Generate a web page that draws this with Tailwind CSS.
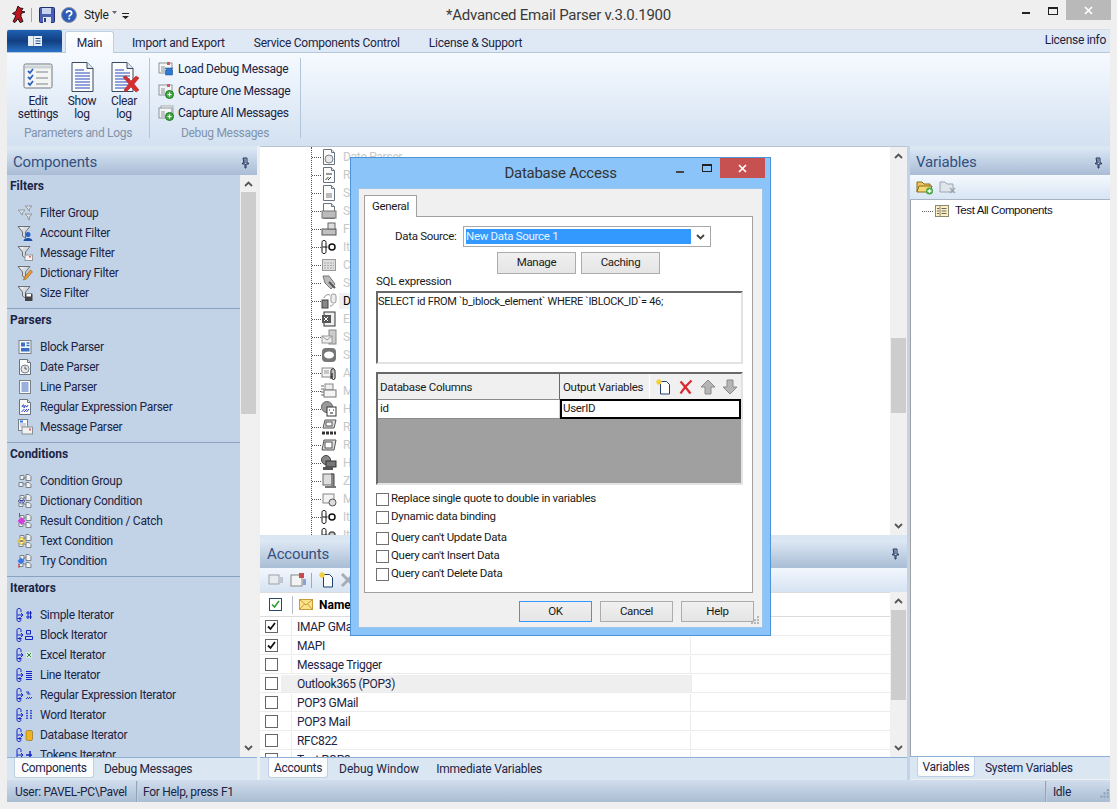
<!DOCTYPE html>
<html>
<head>
<meta charset="utf-8">
<script src="https://cdn.jsdelivr.net/npm/@tailwindcss/browser@4"></script>
</head>
<body class="font-['Roboto',sans-serif] text-[12px] tracking-[-.3px] leading-none text-[#1b2444]">
<svg class="absolute w-0 h-0" aria-hidden="true">
  <symbol id="funnel" viewBox="0 0 16 16"><path d="M1 1.5h12l-4.500 5.500v6l-3-2v-4z" fill="#d8dcdf" stroke="#6c7278"/><path d="M3 2.500h4l-1 1h-2z" fill="#fff"/></symbol>
  <symbol id="doc" viewBox="0 0 16 16"><path d="M2.500.5h8l3 3v12h-11z" fill="#fbfbfb" stroke="#6a7480"/><path d="M10.500.5v3h3" fill="#dfe3e8" stroke="#6a7480"/></symbol>
  <symbol id="cond" viewBox="0 0 16 16"><path d="M3 2.500h4v4h-4zM9 1.500h3l2 2v4h-5zM9 9.500h3l2 2v3h-5zM2 9.500h4v4h-4z" fill="#eef0f2" stroke="#7b8288"/><path d="M6 5.500l3-1M6 10.500l3 1" stroke="#7b8288" fill="none"/></symbol>
  <symbol id="iter" viewBox="0 0 16 16"><path d="M3 1.500c-1.500 0-2 .8-2 2v9c0 1.200.5 2 2 2s2-.8 2-2M3 1.500c1.500 0 2 .8 2 2v1.500" fill="none" stroke="#1424c4" stroke-width="1"/><path d="M1.500 8h5.500M5 6l2 2-2 2M1.500 11.500h3.500M3.500 10l1.500 1.500-1.500 1.500" fill="none" stroke="#1424c4" stroke-width="1"/></symbol>
  <symbol id="xred" viewBox="0 0 16 16"><path d="M2.500 2.500c3 3 6 7 10 12M13.500 1.500c-4 3.500-8 8-11 13" fill="none" stroke="#d9272e" stroke-width="2.300"/></symbol>
  <symbol id="newdoc" viewBox="0 0 16 16"><path d="M4.500 2.500h6l3 3v9.500h-9z" fill="#fff" stroke="#1c3f70"/><path d="M3 0v6M0 3h6M1 1l4 4M5 1l-4 4" stroke="#f2cf3d" stroke-width="1.300"/></symbol>
  <symbol id="pin" viewBox="0 0 10 12"><path d="M3 1h4v5h1.500v1h-2.500v4h-1v-4h-2.500v-1h1.500zM5 1.500v4.500" fill="none" stroke="#20345c" stroke-width="1"/></symbol>
</svg>

<div class="relative w-[1117px] h-[809px] overflow-hidden bg-[#efefef] flex flex-col">
  <!-- title bar -->
  <div class="relative h-[29px] flex items-center shrink-0 pl-[10px]">
    <svg class="w-[13px] h-[18px] ml-[2px]" viewBox="0 0 13 18"><path d="M6 0l2 2 3 .5-2 2.500 4 1-4 1.500v3l2 5-3 1-2-4-3 4-2-1 3-6-3.500-2 3.500-2z" fill="#c1141c" stroke="#1a1a1a" stroke-width="1"/></svg>
    <div class="w-px h-[14px] bg-[#aaa] ml-[6px]"></div>
    <svg class="w-4 h-4 ml-[7px]" viewBox="0 0 16 16"><rect x=".5" y=".5" width="15" height="15" rx="1" fill="#4a5fb0" stroke="#1f2f70"/><rect x="3" y="1" width="9" height="6" fill="#c9d5ee"/><rect x="4" y="10" width="8" height="6" fill="#e4e8f0"/><rect x="5" y="11" width="2" height="4" fill="#2f3f80"/></svg>
    <svg class="w-4 h-4 ml-[6px]" viewBox="0 0 16 16"><circle cx="8" cy="8" r="7.500" fill="#2e5db8" stroke="#8b93a5"/><path d="M5.500 6.200c0-3.200 5.200-3.200 5.200 0 0 2-2.500 1.800-2.500 3.500" fill="none" stroke="#fff" stroke-width="1.700"/><rect x="7.300" y="10.700" width="1.800" height="1.800" fill="#fff"/></svg>
    <span class="ml-[7px] text-[#222]">Style</span>
    <svg class="w-[5px] h-[3px] ml-[3px] mb-[4px]" viewBox="0 0 5 3"><path d="M0 0h5l-2.500 3z" fill="#667"/></svg>
    <svg class="w-[7px] h-[6px] ml-[5px] mt-[2px]" viewBox="0 0 7 6"><path d="M0 0h7v1h-7zM0 3h7l-3.500 3z" fill="#222"/></svg>
    <div class="absolute left-0 right-0 top-[8px] text-center text-[15px] tracking-[-.25px] text-[#3a3a3a]">*Advanced Email Parser v.3.0.1900</div>
    <div class="absolute left-[1022px] top-[12px] w-[8px] h-[2px] bg-[#222]"></div>
    <div class="absolute left-[1048px] top-[7px] w-[10px] h-[8px] border border-t-2 border-[#222]"></div>
    <div class="absolute left-[1066px] top-0 w-[45px] h-[20px] bg-[#b9b9b9] flex items-center justify-center">
      <svg class="w-[9px] h-[9px]" viewBox="0 0 9 9"><path d="M1 1l7 7M8 1l-7 7" stroke="#fff" stroke-width="1.700"/></svg>
    </div>
  </div>

  <div class="ml-[7px] w-[1103px] flex flex-col">
    <!-- ribbon tabs -->
    <div class="relative h-[24px] flex items-end bg-[#dfe9f5] border-t border-[#d4dde8] border-b border-b-[#b4c8de] shrink-0">
      <div class="w-[55px] h-[22px] mb-0 self-start rounded-t-[2px] bg-gradient-to-b from-[#1e62b4] via-[#123f80] to-[#2a72c8] flex items-center justify-center">
        <svg class="w-[14px] h-[10px]" viewBox="0 0 14 10"><rect width="14" height="10" fill="#e9eff7"/><path d="M5.500 0v10" stroke="#9ab"/><path d="M7.500 2.500h5M7.500 5h5M7.500 7.500h5" stroke="#24508f"/></svg>
      </div>
      <div class="ml-[3px] w-[49px] h-[22px] -mb-px rounded-t-[3px] border border-b-0 border-[#c0d0e2] bg-gradient-to-b from-[#fff] to-[#f4f8fd] flex items-center justify-center">Main</div>
      <span class="ml-[18px] mb-[3px] tracking-[-.2px]">Import and Export</span>
      <span class="ml-[29px] mb-[3px] tracking-[-.25px]">Service Components Control</span>
      <span class="ml-[29px] mb-[3px] tracking-[-.2px]">License &amp; Support</span>
      <span class="ml-auto mr-[4px] mb-[6px]">License info</span>
    </div>
    <!-- ribbon -->
    <div class="h-[93px] shrink-0 flex bg-gradient-to-b from-[#f6faff] to-[#d3e1f1] pt-[5px]">
      <div class="w-[143px] h-[80px] border-r border-[#b3c5d8] flex flex-col">
        <div class="flex h-[68px]">
          <div class="w-[62px] flex flex-col items-center">
            <svg class="w-[32px] h-[32px] mt-[3px]" viewBox="0 0 32 32"><rect x="2" y="3" width="28" height="24" rx="1.500" fill="#f4f5f2" stroke="#6f7a84"/><path d="M3 6h26" stroke="#cdd3d8" stroke-width="3"/><path d="M6 10l2 2 3-4M6 16l2 2 3-4M6 22l2 2 3-4" fill="none" stroke="#2f62c0" stroke-width="1.800"/><path d="M14 11h12M14 17h12M14 23h12" stroke="#7a8490" stroke-width="1.200"/></svg>
            <span class="mt-[2px] leading-[13px] text-center">Edit<br>settings</span>
          </div>
          <div class="w-[40px] -ml-[7px] flex flex-col items-center">
            <svg class="w-[32px] h-[32px] mt-[3px]" viewBox="0 0 32 32"><path d="M6 1.500h15l6 6v23h-21z" fill="#fcfcfd" stroke="#3a4a62"/><path d="M21 1.500v6h6" fill="#dfe5ec" stroke="#3a4a62"/><path d="M9 9h9M9 12h15M9 15h15M9 18h15M9 21h15M9 24h15M9 27h15" stroke="#2646b8"/></svg>
            <span class="mt-[2px] leading-[13px] text-center">Show<br>log</span>
          </div>
          <div class="w-[42px] ml-px flex flex-col items-center relative">
            <svg class="w-[32px] h-[32px] mt-[3px]" viewBox="0 0 32 32"><path d="M4 1.500h15l6 6v23h-21z" fill="#fcfcfd" stroke="#3a4a62"/><path d="M19 1.500v6h6" fill="#dfe5ec" stroke="#3a4a62"/><path d="M7 9h9M7 12h15M7 15h15M7 18h15M7 21h15M7 24h15M7 27h15" stroke="#2646b8"/><path d="M15 16l3-1 5 5 5-5 3 2-5 6 5 6-3 2-5-5-5 5-2-2 5-6z" fill="#d62f30" stroke="#a01e20" stroke-width=".5"/></svg>
            <span class="mt-[2px] leading-[13px] text-center">Clear<br>log</span>
          </div>
        </div>
        <div class="mt-auto -mb-[1px] text-center text-[#7f93ab]">Parameters and Logs</div>
      </div>
      <div class="w-[151px] h-[80px] border-r border-[#b3c5d8] flex flex-col">
        <div class="pl-[8px] flex flex-col">
          <div class="h-[22px] flex items-center gap-[4px]"><svg class="w-4 h-4" viewBox="0 0 16 16"><rect x="1" y="2" width="13" height="10" fill="#f4f6f8" stroke="#8b939b"/><rect x="9" y="1" width="3" height="3" fill="#d65a5a"/><path d="M3 6h4M3 8h4M3 10h4" stroke="#8b939b"/><path d="M7 7h8l-2 2h1.500v5h-7v-5h1.500z" fill="#2c7bd0" stroke="#174f90" stroke-width=".5"/></svg><span>Load Debug Message</span></div>
          <div class="h-[22px] flex items-center gap-[4px]"><svg class="w-4 h-4" viewBox="0 0 16 16"><rect x="1" y="2" width="13" height="10" fill="#f4f6f8" stroke="#8b939b"/><rect x="9" y="1" width="3" height="3" fill="#d65a5a"/><path d="M3 6h4M3 8h4M3 10h4" stroke="#8b939b"/><circle cx="11.500" cy="11.500" r="4" fill="#45a845" stroke="#1f7a1f"/><path d="M9.500 11.500h4M11.500 9.500v4" stroke="#fff" stroke-width="1.200"/></svg><span>Capture One Message</span></div>
          <div class="h-[22px] flex items-center gap-[4px]"><svg class="w-4 h-4" viewBox="0 0 16 16"><rect x="3" y="1" width="12" height="9" fill="#fff" stroke="#a3a9af"/><rect x="1" y="3" width="13" height="10" fill="#f4f6f8" stroke="#8b939b"/><path d="M3 7h4M3 9h4M3 11h4" stroke="#8b939b"/><circle cx="11.500" cy="11.500" r="4" fill="#45a845" stroke="#1f7a1f"/><path d="M9.500 11.500h4M11.500 9.500v4" stroke="#fff" stroke-width="1.200"/></svg><span>Capture All Messages</span></div>
        </div>
        <div class="mt-auto -mb-[1px] text-center text-[#7f93ab]">Debug Messages</div>
      </div>
    </div>

    <!-- workspace -->
    <div class="h-[634px] flex shrink-0">
      <!-- left -->
      <div class="w-[250px] flex flex-col">
        <div class="h-[4px] bg-[#dbe6f3]"></div>
        <div class="h-[25px] flex items-center justify-between pl-[6px] pr-[7px] bg-gradient-to-b from-[#d6e3f3] to-[#a9bdd5] tracking-[-.15px]">
          <span class="text-[15px] text-[#34507f]">Components</span>
          <svg class="w-[10px] h-[12px]" viewBox="0 0 10 12"><use href="#pin"/></svg>
        </div>
        <div class="h-[582px] flex bg-[#c2d3e8] overflow-hidden">
          <div class="w-[233px] h-[582px] overflow-hidden">
            <section class="h-[134px] border-b border-[#8ba3c3]">
              <h3 class="h-[20px] pt-[2px] pl-[3px] flex items-center font-bold tracking-normal">Filters</h3>
              <div class="pt-[8px]">
                <div class="h-5 flex items-center pl-[10px] gap-[7px]"><svg class="w-4 h-4" viewBox="0 0 16 16"><path d="M8 1h7l-2.500 3v2l-1.500-1v-1zM1 5h7l-2.500 3v2l-1.500-1v-1zM8 9h7l-2.500 3v3l-1.500-1v-2z" fill="#dfe2e5" stroke="#858b91" stroke-width=".8"/></svg><span>Filter Group</span></div>
                <div class="h-5 flex items-center pl-[10px] gap-[7px]"><svg class="w-4 h-4" viewBox="0 0 16 16"><use href="#funnel"/><circle cx="11" cy="9.500" r="2.500" fill="#2d62c4"/><path d="M6.500 16c0-4 9-4 9 0z" fill="#1f4ea8"/></svg><span>Account Filter</span></div>
                <div class="h-5 flex items-center pl-[10px] gap-[7px]"><svg class="w-4 h-4" viewBox="0 0 16 16"><use href="#funnel"/><rect x="8" y="10" width="7.500" height="5.500" fill="#f6f6f6" stroke="#999"/><rect x="12" y="11" width="2" height="1.500" fill="#d66"/></svg><span>Message Filter</span></div>
                <div class="h-5 flex items-center pl-[10px] gap-[7px]"><svg class="w-4 h-4" viewBox="0 0 16 16"><use href="#funnel"/><path d="M6.500 15l1-3 6-7 2 1.800-6 7z" fill="#ee9a2c" stroke="#8a5a14" stroke-width=".6"/></svg><span>Dictionary Filter</span></div>
                <div class="h-5 flex items-center pl-[10px] gap-[7px]"><svg class="w-4 h-4" viewBox="0 0 16 16"><use href="#funnel"/><rect x="8" y="8.500" width="7.500" height="7.500" rx=".5" fill="#444"/><rect x="9.500" y="9" width="4.500" height="2.500" fill="#fff"/></svg><span>Size Filter</span></div>
              </div>
            </section>
            <section class="h-[134px] border-b border-[#8ba3c3]">
              <h3 class="h-[20px] pt-[2px] pl-[3px] flex items-center font-bold tracking-normal">Parsers</h3>
              <div class="pt-[8px]">
                <div class="h-5 flex items-center pl-[10px] gap-[7px]"><svg class="w-4 h-4" viewBox="0 0 16 16"><rect x="2" y="1.500" width="12" height="13" fill="#f6f7f8" stroke="#7a8288"/><rect x="4" y="3.500" width="4" height="4" fill="#3a6fc4"/><path d="M9.500 4h3M9.500 6.500h3" stroke="#3a6fc4" stroke-width="1.500"/><rect x="4" y="9" width="8.500" height="3.500" fill="#3a6fc4"/></svg><span>Block Parser</span></div>
                <div class="h-5 flex items-center pl-[10px] gap-[7px]"><svg class="w-4 h-4" viewBox="0 0 16 16"><use href="#doc"/><circle cx="8" cy="10" r="4" fill="#e6e8ea" stroke="#7a8288"/><path d="M8 7.500v2.500h2" stroke="#556" fill="none"/></svg><span>Date Parser</span></div>
                <div class="h-5 flex items-center pl-[10px] gap-[7px]"><svg class="w-4 h-4" viewBox="0 0 16 16"><rect x="2.500" y="1.500" width="11" height="13" fill="#f8f9fa" stroke="#7a8288"/><path d="M4.500 4h7M4.500 6h7M4.500 8h7M4.500 10h7M4.500 12h7" stroke="#3a66c0"/></svg><span>Line Parser</span></div>
                <div class="h-5 flex items-center pl-[10px] gap-[7px]"><svg class="w-4 h-4" viewBox="0 0 16 16"><use href="#doc"/><path d="M5 8c1-3 2-3 2 0s1-3 2-1 1 1 2-1M4.500 13l3-3M7 13l3-3M9.500 13l2.500-3" fill="none" stroke="#1d34c0"/></svg><span>Regular Expression Parser</span></div>
                <div class="h-5 flex items-center pl-[10px] gap-[7px]"><svg class="w-4 h-4" viewBox="0 0 16 16"><rect x="1.500" y=".5" width="9" height="11" fill="#f8f9fa" stroke="#7a8288"/><path d="M3 2.500h3" stroke="#2f7de0" stroke-width="2"/><path d="M3 5h6M3 7h6" stroke="#aab"/><rect x="5" y="8" width="10.500" height="7" fill="#f1f1f1" stroke="#8a8f94"/><rect x="12" y="9.500" width="2" height="2" fill="#d66"/></svg><span>Message Parser</span></div>
              </div>
            </section>
            <section class="h-[134px] border-b border-[#8ba3c3]">
              <h3 class="h-[20px] pt-[2px] pl-[3px] flex items-center font-bold tracking-normal">Conditions</h3>
              <div class="pt-[8px]">
                <div class="h-5 flex items-center pl-[10px] gap-[7px]"><svg class="w-4 h-4" viewBox="0 0 16 16"><use href="#cond"/></svg><span>Condition Group</span></div>
                <div class="h-5 flex items-center pl-[10px] gap-[7px]"><svg class="w-4 h-4" viewBox="0 0 16 16"><use href="#cond"/><path d="M1 8l3.500-3 3.500 3-3.500 3z" fill="#fff" stroke="#667"/><path d="M2.500 7.500h4M2.500 9h4" stroke="#2233bb"/></svg><span>Dictionary Condition</span></div>
                <div class="h-5 flex items-center pl-[10px] gap-[7px]"><svg class="w-4 h-4" viewBox="0 0 16 16"><use href="#cond"/><path d="M.5 8l4-4 4 4-4 4z" fill="#d33fdc"/><path d="M2.500 0v4" stroke="#d8302c"/></svg><span>Result Condition / Catch</span></div>
                <div class="h-5 flex items-center pl-[10px] gap-[7px]"><svg class="w-4 h-4" viewBox="0 0 16 16"><use href="#cond"/><path d="M.5 8l4-4 4 4-4 4z" fill="#fff09a" stroke="#d8a810"/><path d="M2.500 8h4" stroke="#223"/></svg><span>Text Condition</span></div>
                <div class="h-5 flex items-center pl-[10px] gap-[7px]"><svg class="w-4 h-4" viewBox="0 0 16 16"><use href="#cond"/><path d="M.5 8l3.500-3.500 3.500 3.500-3.500 3.500z" fill="#3a78e8"/><path d="M2 11v4" stroke="#d8302c"/></svg><span>Try Condition</span></div>
              </div>
            </section>
            <section class="h-[178px]">
              <h3 class="h-[20px] pt-[2px] pl-[3px] flex items-center font-bold tracking-normal">Iterators</h3>
              <div class="pt-[8px]">
                <div class="h-5 flex items-center pl-[9px] gap-[7px]"><svg class="w-[18px] h-4 -mr-[1px]" viewBox="0 0 18 16"><use href="#iter" width="16" height="16"/><path d="M10 6h6M10 10h6M12 4v8M14.500 4v8" stroke="#1424c4"/></svg><span>Simple Iterator</span></div>
                <div class="h-5 flex items-center pl-[9px] gap-[7px]"><svg class="w-[18px] h-4 -mr-[1px]" viewBox="0 0 18 16"><use href="#iter" width="16" height="16"/><path d="M10.500 3.500h4v3.500h-4zM9.500 9.500h7v3h-7z" fill="none" stroke="#1424c4"/></svg><span>Block Iterator</span></div>
                <div class="h-5 flex items-center pl-[9px] gap-[7px]"><svg class="w-[18px] h-4 -mr-[1px]" viewBox="0 0 18 16"><use href="#iter" width="16" height="16"/><rect x="10" y="5" width="6" height="6" fill="#dfe8df"/><path d="M11 6l4 4M15 6l-4 4" stroke="#1c8a3c"/></svg><span>Excel Iterator</span></div>
                <div class="h-5 flex items-center pl-[9px] gap-[7px]"><svg class="w-[18px] h-4 -mr-[1px]" viewBox="0 0 18 16"><use href="#iter" width="16" height="16"/><path d="M10 4.500h6M10 6.500h6M10 8.500h6M10 10.500h6M10 12.500h6" stroke="#1424c4"/></svg><span>Line Iterator</span></div>
                <div class="h-5 flex items-center pl-[9px] gap-[7px]"><svg class="w-[18px] h-4 -mr-[1px]" viewBox="0 0 18 16"><use href="#iter" width="16" height="16"/><path d="M10 5h3l-1.500 2h3M10 12l2-2M12 12l2-2M14 12l2-2" fill="none" stroke="#1424c4" stroke-width=".9"/></svg><span>Regular Expression Iterator</span></div>
                <div class="h-5 flex items-center pl-[9px] gap-[7px]"><svg class="w-[18px] h-4 -mr-[1px]" viewBox="0 0 18 16"><use href="#iter" width="16" height="16"/><path d="M11 3v10M15 3v10" stroke="#1424c4" stroke-width="1.500" stroke-dasharray="1.500 1"/></svg><span>Word Iterator</span></div>
                <div class="h-5 flex items-center pl-[9px] gap-[7px]"><svg class="w-[18px] h-4 -mr-[1px]" viewBox="0 0 18 16"><use href="#iter" width="16" height="16"/><rect x="10" y="3.500" width="6.500" height="10" rx="1.500" fill="#efb321" stroke="#8a6510" stroke-width=".6"/></svg><span>Database Iterator</span></div>
                <div class="h-5 flex items-center pl-[9px] gap-[7px]"><svg class="w-[18px] h-4 -mr-[1px]" viewBox="0 0 18 16"><use href="#iter" width="16" height="16"/><path d="M10 8h6M14 4v9" stroke="#1424c4" stroke-width="1.500"/></svg><span>Tokens Iterator</span></div>
              </div>
            </section>
          </div>
          <div class="w-[17px] h-[582px] bg-[#f0f0f0] flex flex-col items-center">
            <svg class="w-[9px] h-[6px] mt-[6px] shrink-0" viewBox="0 0 9 6"><path d="M1 5l3.500-3.500 3.500 3.500" fill="none" stroke="#555" stroke-width="1.800"/></svg>
            <div class="w-[15px] h-[222px] mt-[5px] bg-[#cdcdcd]"></div>
            <svg class="w-[9px] h-[6px] mt-auto mb-[6px] shrink-0" viewBox="0 0 9 6"><path d="M1 1l3.500 3.500 3.500-3.500" fill="none" stroke="#555" stroke-width="1.800"/></svg>
          </div>
        </div>
        <div class="h-[23px] flex items-start border-t border-[#8fb0d4] bg-[#dbe6f3] pl-[7px]">
          <div class="w-[80px] h-[20px] rounded-b-[3px] border border-t-0 border-[#c0d0e2] bg-[#fbfcfe] flex items-center justify-center">Components</div>
          <span class="ml-[10px] mt-[5px] whitespace-nowrap">Debug Messages</span>
        </div>
      </div>
      <div class="w-[3px] bg-[#efefef]"></div>

      <!-- center -->
      <div class="w-[647px] flex flex-col">
        <div class="h-[389px] flex border-t border-[#b7c4d2] bg-white overflow-hidden">
          <div class="relative w-[630px] overflow-hidden pt-[1px]">
            <div class="absolute left-[51px] top-0 bottom-0 border-l border-dotted border-[#555]"></div>
            <div class="h-[18px] flex items-center pl-[52px]"><div class="w-[9px] border-t border-dotted border-[#555]"></div><svg class="w-4 h-4" viewBox="0 0 16 16"><use href="#doc"/><circle cx="8" cy="10" r="4" fill="#e6e8ea" stroke="#7a8288"/></svg><span class="ml-[6px] text-[#c8c8c8]">Date Parser</span></div>
            <div class="h-[18px] flex items-center pl-[52px]"><div class="w-[9px] border-t border-dotted border-[#555]"></div><svg class="w-4 h-4" viewBox="0 0 16 16"><use href="#doc"/><path d="M4.500 13l3-3M7 13l3-3M5 7h6" stroke="#333"/></svg><span class="ml-[6px] text-[#c8c8c8]">Regex</span></div>
            <div class="h-[18px] flex items-center pl-[52px]"><div class="w-[9px] border-t border-dotted border-[#555]"></div><svg class="w-4 h-4" viewBox="0 0 16 16"><use href="#doc"/><rect x="5" y="8" width="6" height="5" fill="#bbb"/></svg><span class="ml-[6px] text-[#c8c8c8]">Set</span></div>
            <div class="h-[18px] flex items-center pl-[52px]"><div class="w-[9px] border-t border-dotted border-[#555]"></div><svg class="w-4 h-4" viewBox="0 0 16 16"><use href="#doc"/><rect x="1" y="8" width="14" height="7" fill="#bbb" stroke="#777"/></svg><span class="ml-[6px] text-[#c8c8c8]">Save</span></div>
            <div class="h-[18px] flex items-center pl-[52px]"><div class="w-[9px] border-t border-dotted border-[#555]"></div><svg class="w-4 h-4" viewBox="0 0 16 16"><rect x="1" y="8" width="14" height="6" fill="#c0c0c0" stroke="#555"/><rect x="7" y="2" width="7" height="6" fill="#ddd" stroke="#666"/></svg><span class="ml-[6px] text-[#c8c8c8]">Fax</span></div>
            <div class="h-[18px] flex items-center pl-[52px]"><div class="w-[9px] border-t border-dotted border-[#555]"></div><svg class="w-4 h-4" viewBox="0 0 16 16"><path d="M3 1.500c-1.500 0-2 .8-2 2v9c0 1.200.5 2 2 2s2-.8 2-2v-9c0-1.200-.5-2-2-2zM1.500 8h5" fill="none" stroke="#111"/><circle cx="11" cy="8" r="3" fill="#fff" stroke="#111" stroke-width="1.500"/></svg><span class="ml-[6px] text-[#c8c8c8]">It</span></div>
            <div class="h-[18px] flex items-center pl-[52px]"><div class="w-[9px] border-t border-dotted border-[#555]"></div><svg class="w-4 h-4" viewBox="0 0 16 16"><rect x="1.500" y="2.500" width="13" height="11" fill="#ddd" stroke="#999"/><path d="M3 6h10M3 8.500h10M3 11h10" stroke="#aaa" stroke-dasharray="2 1"/></svg><span class="ml-[6px] text-[#c8c8c8]">Calc</span></div>
            <div class="h-[18px] flex items-center pl-[52px]"><div class="w-[9px] border-t border-dotted border-[#555]"></div><svg class="w-4 h-4" viewBox="0 0 16 16"><path d="M2 1h6l6 8-4 5-6-6z" fill="#bbb" stroke="#777"/><path d="M8 7l6 6" stroke="#555" stroke-width="2"/></svg><span class="ml-[6px] text-[#c8c8c8]">Set</span></div>
            <div class="h-[18px] flex items-center pl-[52px]"><div class="w-[9px] border-t border-dotted border-[#555]"></div><svg class="w-4 h-4" viewBox="0 0 16 16"><rect x="1" y="7" width="6" height="8" fill="#888" stroke="#444"/><rect x="10" y="1" width="5" height="9" rx="2" fill="#eee" stroke="#999"/><path d="M3 5c1-3 4-4 6-3M9 13c2 0 3-1 3-2" fill="none" stroke="#888"/></svg><span class="ml-[2px] pl-[4px] h-[16px] flex items-center bg-[#f0f0f0] text-[#000]">Database</span></div>
            <div class="h-[18px] flex items-center pl-[52px]"><div class="w-[9px] border-t border-dotted border-[#555]"></div><svg class="w-4 h-4" viewBox="0 0 16 16"><rect x="3" y="1" width="11" height="14" fill="#eee" stroke="#333"/><rect x="1" y="4" width="9" height="8" fill="#555"/><path d="M3 6l4 4M7 6l-4 4" stroke="#fff"/></svg><span class="ml-[6px] text-[#c8c8c8]">Excel</span></div>
            <div class="h-[18px] flex items-center pl-[52px]"><div class="w-[9px] border-t border-dotted border-[#555]"></div><svg class="w-4 h-4" viewBox="0 0 16 16"><rect x="8" y="1" width="7" height="14" fill="#ccc" stroke="#888"/><rect x="1" y="7" width="10" height="7" fill="#eee" stroke="#999"/><path d="M1 7l5 4 5-4" fill="none" stroke="#999"/></svg><span class="ml-[6px] text-[#c8c8c8]">Send</span></div>
            <div class="h-[18px] flex items-center pl-[52px]"><div class="w-[9px] border-t border-dotted border-[#555]"></div><svg class="w-4 h-4" viewBox="0 0 16 16"><rect x="1" y="1" width="14" height="14" rx="4" fill="#777"/><ellipse cx="8" cy="8" rx="5" ry="3.500" fill="#fff"/></svg><span class="ml-[6px] text-[#c8c8c8]">SMS</span></div>
            <div class="h-[18px] flex items-center pl-[52px]"><div class="w-[9px] border-t border-dotted border-[#555]"></div><svg class="w-4 h-4" viewBox="0 0 16 16"><rect x="1" y="3" width="11" height="9" fill="#f4f4f4" stroke="#888"/><path d="M3 6h5M3 8h5" stroke="#999"/><path d="M10 14V6c0-3 4-3 4 0v7c0 2-3 2-3 0V8" fill="none" stroke="#111"/></svg><span class="ml-[6px] text-[#c8c8c8]">Attach</span></div>
            <div class="h-[18px] flex items-center pl-[52px]"><div class="w-[9px] border-t border-dotted border-[#555]"></div><svg class="w-4 h-4" viewBox="0 0 16 16"><rect x="4" y="1" width="8" height="6" fill="#eee" stroke="#888"/><rect x="3" y="7" width="12" height="7" fill="#f5f5f5" stroke="#777"/><path d="M0 3h3M0 6h3M0 9h3M0 12h3" stroke="#666"/></svg><span class="ml-[6px] text-[#c8c8c8]">Mail</span></div>
            <div class="h-[18px] flex items-center pl-[52px]"><div class="w-[9px] border-t border-dotted border-[#555]"></div><svg class="w-4 h-4" viewBox="0 0 16 16"><circle cx="6" cy="6" r="5.500" fill="#9a9a9a" stroke="#666"/><rect x="6" y="6" width="9" height="9" fill="#fff" stroke="#333"/><path d="M8 9h1M12 9h1M9 12h3" stroke="#222"/></svg><span class="ml-[6px] text-[#c8c8c8]">HTTP</span></div>
            <div class="h-[18px] flex items-center pl-[52px]"><div class="w-[9px] border-t border-dotted border-[#555]"></div><svg class="w-4 h-4" viewBox="0 0 16 16"><path d="M4 1h11l-2 8h-11z" fill="#ddd" stroke="#555"/><rect x="5" y="3" width="6" height="4" fill="#fff" stroke="#555"/><path d="M1 14h14" stroke="#333" stroke-width="3" stroke-dasharray="3 1"/></svg><span class="ml-[6px] text-[#c8c8c8]">Run</span></div>
            <div class="h-[18px] flex items-center pl-[52px]"><div class="w-[9px] border-t border-dotted border-[#555]"></div><svg class="w-4 h-4" viewBox="0 0 16 16"><path d="M3 3h12l-2 10h-12z" fill="#ddd" stroke="#555"/><rect x="4" y="5" width="7" height="6" fill="#fff" stroke="#555"/></svg><span class="ml-[6px] text-[#c8c8c8]">Run</span></div>
            <div class="h-[18px] flex items-center pl-[52px]"><div class="w-[9px] border-t border-dotted border-[#555]"></div><svg class="w-4 h-4" viewBox="0 0 16 16"><circle cx="5" cy="5" r="4.500" fill="#888" stroke="#444"/><rect x="5" y="6" width="10" height="6" fill="#777" stroke="#333"/><rect x="2" y="12" width="10" height="3" fill="#555"/></svg><span class="ml-[6px] text-[#c8c8c8]">Host</span></div>
            <div class="h-[18px] flex items-center pl-[52px]"><div class="w-[9px] border-t border-dotted border-[#555]"></div><svg class="w-4 h-4" viewBox="0 0 16 16"><rect x="2" y="1" width="10" height="11" fill="#ddd" stroke="#666"/><path d="M10 1h3v13h-3" fill="#888" stroke="#444"/><rect x="4" y="13" width="11" height="2" fill="#777"/></svg><span class="ml-[6px] text-[#c8c8c8]">Zip</span></div>
            <div class="h-[18px] flex items-center pl-[52px]"><div class="w-[9px] border-t border-dotted border-[#555]"></div><svg class="w-4 h-4" viewBox="0 0 16 16"><rect x="2" y="3" width="11" height="9" fill="#f2f2f2" stroke="#888"/><circle cx="11.500" cy="11.500" r="3.500" fill="#ddd" stroke="#555"/></svg><span class="ml-[6px] text-[#c8c8c8]">Macro</span></div>
            <div class="h-[18px] flex items-center pl-[52px]"><div class="w-[9px] border-t border-dotted border-[#555]"></div><svg class="w-4 h-4" viewBox="0 0 16 16"><path d="M3 1.500c-1.500 0-2 .8-2 2v9c0 1.200.5 2 2 2s2-.8 2-2v-9c0-1.200-.5-2-2-2zM1.500 8h5" fill="none" stroke="#111"/><circle cx="11" cy="8" r="3" fill="#fff" stroke="#111" stroke-width="1.500"/></svg><span class="ml-[6px] text-[#c8c8c8]">It</span></div>
            <div class="h-[18px] flex items-center pl-[52px]"><div class="w-[9px] border-t border-dotted border-[#555]"></div><svg class="w-4 h-4" viewBox="0 0 16 16"><path d="M3 1.500c-1.500 0-2 .8-2 2v9c0 1.200.5 2 2 2s2-.8 2-2v-9c0-1.200-.5-2-2-2zM1.500 8h5" fill="none" stroke="#111"/><circle cx="11" cy="8" r="3" fill="#ccc" stroke="#555" stroke-width="1.500"/></svg><span class="ml-[6px] text-[#c8c8c8]">It</span></div>
          </div>
          <div class="w-[17px] bg-[#f0f0f0] flex flex-col items-center">
            <svg class="w-[9px] h-[6px] mt-[6px] shrink-0" viewBox="0 0 9 6"><path d="M1 5l3.500-3.500 3.500 3.500" fill="none" stroke="#555" stroke-width="1.800"/></svg>
            <div class="w-[15px] h-[75px] mt-[179px] bg-[#cdcdcd]"></div>
            <svg class="w-[9px] h-[6px] mt-auto mb-[6px] shrink-0" viewBox="0 0 9 6"><path d="M1 1l3.500 3.500 3.500-3.500" fill="none" stroke="#555" stroke-width="1.800"/></svg>
          </div>
        </div>
        <div class="h-[5px] bg-[#dbe6f3]"></div>
        <div class="h-[28px] flex items-center justify-between pl-[7px] pr-[7px] bg-gradient-to-b from-[#dfe9f5] to-[#a9bdd5] tracking-[-.15px]">
          <span class="text-[15px] text-[#34507f]">Accounts</span>
          <svg class="w-[10px] h-[12px]" viewBox="0 0 10 12"><use href="#pin"/></svg>
        </div>
        <div class="h-[24px] flex items-center pl-[8px] bg-gradient-to-b from-[#f2f7fd] to-[#d6e3f2]">
          <svg class="w-4 h-4" viewBox="0 0 16 16"><rect x="1" y="3" width="10" height="9" fill="#e8ecf0" stroke="#9aa2aa"/><path d="M12 6h3M12 8h3M12 10h3" stroke="#9aa2aa"/></svg>
          <svg class="w-4 h-4 ml-[6px]" viewBox="0 0 16 16"><rect x="1" y="3" width="11" height="11" fill="#f3f3f3" stroke="#888"/><rect x="9" y="1" width="5" height="5" fill="#c94a4a"/><path d="M13 8h3M13 10h3M13 12h3" stroke="#3558b8"/></svg>
          <div class="w-px h-[15px] ml-[5px] bg-[#9aabbf]"></div>
          <svg class="w-4 h-4 ml-[7px]" viewBox="0 0 16 16"><use href="#newdoc"/></svg>
          <svg class="w-4 h-4 ml-[5px]" viewBox="0 0 16 16"><path d="M2 2l12 12M14 2l-12 12" stroke="#a8adb3" stroke-width="3"/></svg>
        </div>
        <div class="h-[165px] flex overflow-hidden">
          <div class="w-[630px] h-[165px] overflow-hidden bg-white">
            <div class="h-[25px] flex items-center border-t border-b border-[#dcdcdc]">
              <div class="w-[32px] flex justify-center"><div class="w-[13px] h-[13px] border border-[#1f4a6e] flex items-center justify-center ml-[-2px]"><svg class="w-[9px] h-[9px]" viewBox="0 0 9 9"><path d="M1 4.500l2.500 2.500 4.500-6" fill="none" stroke="#33a033" stroke-width="1.700"/></svg></div></div>
              <div class="w-px h-[18px] bg-[#b5bcc5]"></div>
              <svg class="w-[14px] h-[11px] ml-[6px]" viewBox="0 0 14 11"><rect x=".5" y=".5" width="13" height="10" fill="#fce28b" stroke="#c99a38"/><path d="M.5 .5l6.500 5.500 6.500-5.500M.5 10.500l5-5.500M13.500 10.500l-5-5.500" fill="none" stroke="#c99a38"/></svg>
              <span class="ml-[6px] font-bold tracking-normal text-black">Name</span>
            </div>
            <div class="h-[19px] pt-px flex items-center border-b border-[#ececec]"><div class="w-[32px] h-full border-r border-[#ececec] pl-[5px] flex items-center"><div class="w-[13px] h-[13px] border border-[#666] flex items-center justify-center"><svg class="w-[9px] h-[9px]" viewBox="0 0 9 9"><path d="M1 4.500l2.500 2.500 4.500-6" fill="none" stroke="#111" stroke-width="1.800"/></svg></div></div><span class="ml-[5px] w-[394px] h-full border-r border-[#ececec] flex items-center">IMAP GMail</span></div>
            <div class="h-[19px] pt-px flex items-center border-b border-[#ececec]"><div class="w-[32px] h-full border-r border-[#ececec] pl-[5px] flex items-center"><div class="w-[13px] h-[13px] border border-[#666] flex items-center justify-center"><svg class="w-[9px] h-[9px]" viewBox="0 0 9 9"><path d="M1 4.500l2.500 2.500 4.500-6" fill="none" stroke="#111" stroke-width="1.800"/></svg></div></div><span class="ml-[5px] w-[394px] h-full border-r border-[#ececec] flex items-center">MAPI</span></div>
            <div class="h-[19px] pt-px flex items-center border-b border-[#ececec]"><div class="w-[32px] h-full border-r border-[#ececec] pl-[5px] flex items-center"><div class="w-[13px] h-[13px] border border-[#666]"></div></div><span class="ml-[5px] w-[394px] h-full border-r border-[#ececec] flex items-center">Message Trigger</span></div>
            <div class="h-[19px] pt-px flex items-center border-b border-[#ececec]"><div class="w-[21px] h-full pl-[5px] flex items-center shrink-0"><div class="w-[13px] h-[13px] border border-[#666] shrink-0"></div></div><span class="pl-[16px] w-[411px] h-full bg-[#efefef] border-r border-[#ececec] flex items-center">Outlook365 (POP3)</span></div>
            <div class="h-[19px] pt-px flex items-center border-b border-[#ececec]"><div class="w-[32px] h-full border-r border-[#ececec] pl-[5px] flex items-center"><div class="w-[13px] h-[13px] border border-[#666]"></div></div><span class="ml-[5px] w-[394px] h-full border-r border-[#ececec] flex items-center">POP3 GMail</span></div>
            <div class="h-[19px] pt-px flex items-center border-b border-[#ececec]"><div class="w-[32px] h-full border-r border-[#ececec] pl-[5px] flex items-center"><div class="w-[13px] h-[13px] border border-[#666]"></div></div><span class="ml-[5px] w-[394px] h-full border-r border-[#ececec] flex items-center">POP3 Mail</span></div>
            <div class="h-[19px] pt-px flex items-center border-b border-[#ececec]"><div class="w-[32px] h-full border-r border-[#ececec] pl-[5px] flex items-center"><div class="w-[13px] h-[13px] border border-[#666]"></div></div><span class="ml-[5px] w-[394px] h-full border-r border-[#ececec] flex items-center">RFC822</span></div>
            <div class="h-[19px] pt-px flex items-center border-b border-[#ececec]"><div class="w-[32px] h-full border-r border-[#ececec] pl-[5px] flex items-center"><div class="w-[13px] h-[13px] border border-[#666]"></div></div><span class="ml-[5px] w-[394px] h-full border-r border-[#ececec] flex items-center">Test POP3</span></div>
          </div>
          <div class="w-[17px] bg-[#f0f0f0] flex flex-col items-center">
            <svg class="w-[9px] h-[6px] mt-[6px] shrink-0" viewBox="0 0 9 6"><path d="M1 5l3.500-3.500 3.500 3.500" fill="none" stroke="#555" stroke-width="1.800"/></svg>
            <div class="w-[15px] h-[90px] mt-[6px] bg-[#cdcdcd]"></div>
            <svg class="w-[9px] h-[6px] mt-auto mb-[6px] shrink-0" viewBox="0 0 9 6"><path d="M1 1l3.500 3.500 3.500-3.500" fill="none" stroke="#555" stroke-width="1.800"/></svg>
          </div>
        </div>
        <div class="h-[23px] flex items-start border-t border-[#8fb0d4] bg-[#dbe6f3] pl-[8px]">
          <div class="w-[60px] h-[20px] rounded-b-[3px] border border-t-0 border-[#c0d0e2] bg-[#fbfcfe] flex items-center justify-center">Accounts</div>
          <span class="ml-[11px] mt-[5px] tracking-normal">Debug Window</span>
          <span class="ml-[17px] mt-[5px] tracking-[-.2px]">Immediate Variables</span>
        </div>
      </div>
      <div class="w-[3px] bg-[#c2d3e8]"></div>

      <!-- right -->
      <div class="w-[200px] flex flex-col">
        <div class="h-[4px] bg-[#dbe6f3]"></div>
        <div class="h-[25px] flex items-center justify-between pl-[6px] pr-[7px] bg-gradient-to-b from-[#d6e3f3] to-[#a9bdd5] tracking-[-.15px]">
          <span class="text-[15px] text-[#34507f]">Variables</span>
          <svg class="w-[10px] h-[12px]" viewBox="0 0 10 12"><use href="#pin"/></svg>
        </div>
        <div class="h-[25px] flex items-center pl-[6px] gap-[5px] bg-gradient-to-b from-[#f4f9fe] to-[#d8e5f3] border-b border-[#a8b4c2]">
          <svg class="w-[18px] h-4" viewBox="0 0 18 16"><path d="M1 13V3h5l2 2h6v2" fill="#eec85c" stroke="#8a6a1c"/><path d="M1 13l2-6h13l-2 6z" fill="#f6d977" stroke="#8a6a1c"/><circle cx="13.500" cy="12" r="3.500" fill="#45a845"/><path d="M11.500 12h4M13.500 10v4" stroke="#fff" stroke-width="1.300"/></svg>
          <svg class="w-[18px] h-4" viewBox="0 0 18 16"><path d="M1 13V3h5l2 2h6v8z" fill="#dfe5ea" stroke="#9aa5b0"/><path d="M11 9l5 5M16 9l-5 5" stroke="#9aa5b0" stroke-width="1.500"/></svg>
        </div>
        <div class="h-[556px] bg-white border-l border-[#a0a0a0] pt-[2px]">
          <div class="h-[18px] flex items-center pl-[11px] font-['Liberation_Sans',sans-serif] text-[11.500px] tracking-[-.4px] text-[#10102c]"><div class="w-[11px] border-t border-dotted border-[#666]"></div><svg class="w-4 h-4 ml-px" viewBox="0 0 16 16"><rect x="1.500" y="2.500" width="13" height="11" fill="#fdf0c4" stroke="#8a8a70"/><path d="M6 3v10" stroke="#8a8a70"/><path d="M3 5.500h2M3 8h2M3 10.500h2M7.500 5.500h5M7.500 8h5M7.500 10.500h5" stroke="#444" stroke-width=".8"/></svg><span class="ml-[5px]">Test All Components</span></div>
        </div>
        <div class="h-[23px] flex items-start border-t border-[#8fb0d4] bg-[#dbe6f3] pl-[7px]">
          <div class="w-[58px] h-[20px] rounded-b-[3px] border border-t-0 border-[#c0d0e2] bg-[#fbfcfe] flex items-center justify-center">Variables</div>
          <span class="ml-[10px] mt-[5px]">System Variables</span>
        </div>
      </div>
    </div>

    <!-- status -->
    <div class="h-[22px] flex items-center pt-px bg-gradient-to-b from-[#d1dded] to-[#a9bdd3] shrink-0">
      <span class="ml-[8px] w-[121px]">User: PAVEL-PC\Pavel</span>
      <div class="w-[2px] h-full bg-[#c0cddc] border-l border-[#8fa5bc]"></div>
      <span class="ml-[5px]">For Help, press F1</span>
      <div class="ml-auto w-[2px] h-full bg-[#c0cddc] border-l border-[#8fa5bc]"></div>
      <span class="ml-[6px] mr-[4px]">Idle</span>
      <svg class="w-[13px] h-[13px] ml-[22px] self-end" viewBox="0 0 12 12"><path d="M9 0h2v2h-2zM6 3h2v2h-2zM9 3h2v2h-2zM3 6h2v2h-2zM6 6h2v2h-2zM9 6h2v2h-2z" fill="#8fa5bc"/></svg>
    </div>
  </div>

  <!-- dialog -->
  <div class="absolute left-[350px] top-[157px] w-[421px] h-[479px] border border-[#4e93d8] bg-[#8bc4f8] flex flex-col">
    <div class="relative h-[30px] shrink-0 flex items-center justify-center text-[15px] tracking-[-.25px] text-[#333] pt-[1px]">Database Access
      <div class="absolute left-[325px] top-[13px] w-[8px] h-[2px] bg-[#444]"></div>
      <div class="absolute left-[351px] top-[6px] w-[10px] h-[8px] border border-t-2 border-[#222]"></div>
      <div class="absolute left-[369px] top-0 w-[45px] h-[20px] bg-[#c75050] flex items-center justify-center"><svg class="w-[9px] h-[9px]" viewBox="0 0 9 9"><path d="M1 1l7 7M8 1l-7 7" stroke="#fff" stroke-width="1.700"/></svg></div>
    </div>
    <div class="relative mx-[7px] h-[440px] bg-[#f0f0f0] border border-[#9ec6ea] pl-[5px] pt-[6px] text-[11.500px] text-[#1a1a1a]">
      <div class="relative z-10 w-[53px] h-[22px] bg-white border border-b-0 border-[#a0a0a0] flex items-center justify-center">General</div>
      <div class="w-[389px] h-[377px] -mt-px bg-white border border-[#a0a0a0] pl-[11px]">
        <div class="flex items-center mt-[9px] h-[21px]">
          <span class="ml-[19px] w-[68px]">Data Source:</span>
          <div class="w-[248px] h-[21px] border border-[#a8a8a8] flex items-center bg-white pl-[2px]">
            <div class="w-[225px] h-[15px] bg-[#3399ff] text-[#eaf4ff] flex items-center">New Data Source 1</div>
            <svg class="w-[9px] h-[6px] ml-[5px]" viewBox="0 0 9 6"><path d="M1 1l3.500 3.500 3.500-3.500" fill="none" stroke="#444" stroke-width="1.800"/></svg>
          </div>
        </div>
        <div class="flex mt-[5px] ml-[121px] gap-[5px]">
          <div class="w-[79px] h-[22px] border border-[#acacac] bg-gradient-to-b from-[#f0f0f0] to-[#e5e5e5] flex items-center justify-center">Manage</div>
          <div class="w-[79px] h-[22px] border border-[#acacac] bg-gradient-to-b from-[#f0f0f0] to-[#e5e5e5] flex items-center justify-center">Caching</div>
        </div>
        <div class="h-[16px] flex items-center">SQL expression</div>
        <div class="w-[367px] h-[73px] mt-[1px] border-2 border-t-[#696969] border-l-[#696969] border-r-[#e3e3e3] border-b-[#e3e3e3] pt-[3px] whitespace-nowrap text-[11px]">SELECT id FROM `b_iblock_element` WHERE `IBLOCK_ID`= 46;</div>
        <div class="w-[367px] h-[113px] mt-[8px] border-2 border-t-[#696969] border-l-[#696969] border-r-[#e3e3e3] border-b-[#e3e3e3] bg-[#a0a0a0] flex flex-col">
          <div class="h-[26px] flex bg-[#f0f0f0] border-b border-[#8a8a8a] shrink-0">
            <div class="w-[182px] border-r border-[#696969] flex items-center pl-[2px] pt-[3px]">Database Columns</div>
            <div class="w-[90px] border-r border-[#ffffff] flex items-center pl-[3px] pt-[3px]">Output Variables</div>
            <div class="flex items-center pl-[6px] gap-[6px]">
              <svg class="w-4 h-4" viewBox="0 0 16 16"><use href="#newdoc"/></svg>
              <svg class="w-4 h-4" viewBox="0 0 16 16"><use href="#xred"/></svg>
              <svg class="w-4 h-4" viewBox="0 0 16 16"><path d="M8 1l7 7h-4v7h-6v-7h-4z" fill="#b5b5b5" stroke="#8a8a8a"/></svg>
              <svg class="w-4 h-4" viewBox="0 0 16 16"><path d="M5 1h6v7h4l-7 7-7-7h4z" fill="#b5b5b5" stroke="#8a8a8a"/></svg>
            </div>
          </div>
          <div class="h-[19px] flex bg-white border-b border-[#8a8a8a] shrink-0">
            <div class="w-[182px] border-r border-[#d0d0d0] flex items-center pl-[2px]">id</div>
            <div class="w-[181px] border-2 border-black flex items-center pl-[1px] -my-px">UserID</div>
          </div>
        </div>
        <div class="mt-[7px] h-[14px] flex items-center gap-[2px]"><div class="w-[13px] h-[13px] border border-[#707070] bg-white"></div><span>Replace single quote to double in variables</span></div>
        <div class="mt-[4px] h-[14px] flex items-center gap-[2px]"><div class="w-[13px] h-[13px] border border-[#707070] bg-white"></div><span>Dynamic data binding</span></div>
        <div class="mt-[7px] h-[14px] flex items-center gap-[2px]"><div class="w-[13px] h-[13px] border border-[#707070] bg-white"></div><span>Query can't Update Data</span></div>
        <div class="mt-[4px] h-[14px] flex items-center gap-[2px]"><div class="w-[13px] h-[13px] border border-[#707070] bg-white"></div><span>Query can't Insert Data</span></div>
        <div class="mt-[4px] h-[14px] flex items-center gap-[2px]"><div class="w-[13px] h-[13px] border border-[#707070] bg-white"></div><span>Query can't Delete Data</span></div>
      </div>
      <div class="flex justify-end gap-[8px] mt-[8px] w-[390px]">
        <div class="w-[73px] h-[21px] border border-[#3399ff] bg-gradient-to-b from-[#f0f0f0] to-[#e5e5e5] flex items-center justify-center">OK</div>
        <div class="w-[73px] h-[21px] border border-[#acacac] bg-gradient-to-b from-[#f0f0f0] to-[#e5e5e5] flex items-center justify-center">Cancel</div>
        <div class="w-[73px] h-[21px] border border-[#acacac] bg-gradient-to-b from-[#f0f0f0] to-[#e5e5e5] flex items-center justify-center">Help</div>
      </div>
      <svg class="absolute right-[2px] bottom-[2px] w-[9px] h-[9px]" viewBox="0 0 9 9"><path d="M6 0h2v2h-2zM3 3h2v2h-2zM6 3h2v2h-2zM0 6h2v2h-2zM3 6h2v2h-2zM6 6h2v2h-2z" fill="#b5b5b5"/></svg>
    </div>
  </div>
</div>
</body>
</html>
